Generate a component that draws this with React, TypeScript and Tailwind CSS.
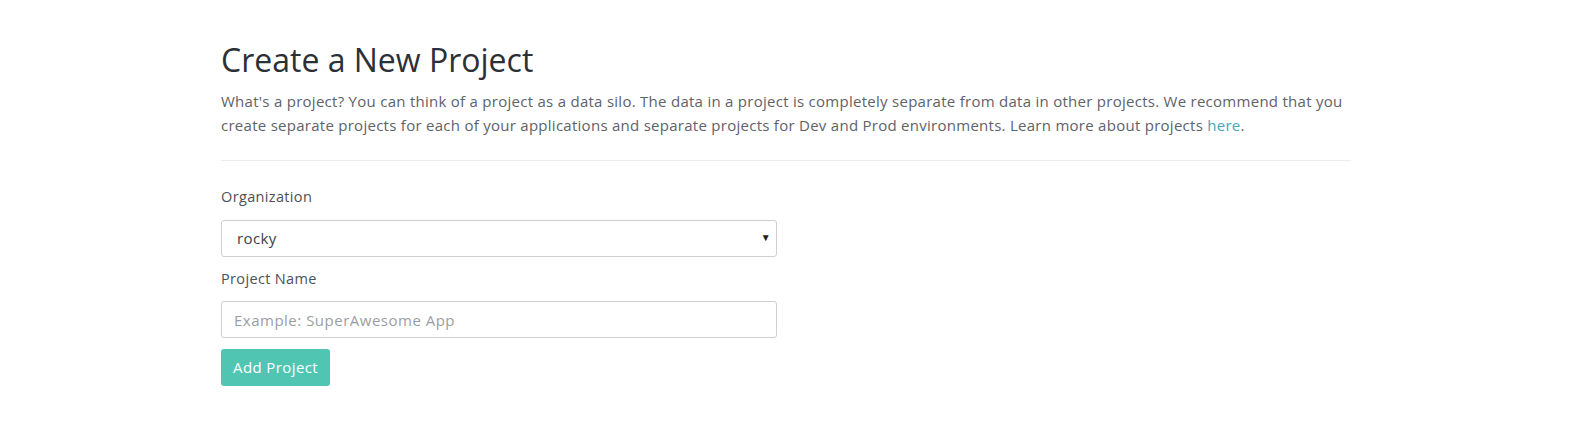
import { useState } from "react";

const font = { fontFamily: '"Open Sans", "Liberation Sans", sans-serif' };

export default function App() {
  const [org, setOrg] = useState("rocky");
  const [name, setName] = useState("");

  return (
    <div className="min-h-[437px] bg-white tracking-[0.27px]" style={font}>
      <div className="ml-[221px] w-[1130px] pt-[40px]">
        <h1 className="text-[32px] leading-[40px] font-normal tracking-[0px] text-[#2b3036]">
          Create a New Project
        </h1>
        <p className="mt-[9px] text-[15px] leading-[24px] text-[#5e6269]">
          What's a project? You can think of a project as a data silo. The data in a project is completely separate
          from data in other projects. We recommend that you create separate projects for each of your applications
          and separate projects for Dev and Prod environments. Learn more about projects{" "}
          <a href="#" className="text-[#3fa7b8]">
            here
          </a>
          .
        </p>
        <div className="mt-[23px] h-px bg-[#ececec]" />

        <form className="mt-[26px] w-[556px]" onSubmit={(e) => e.preventDefault()}>
          <label className="block text-[14.5px] leading-[20px] tracking-[0.35px] text-[#4d5157]">Organization</label>
          <div className="relative mt-[13px]">
            <select
              value={org}
              onChange={(e) => setOrg(e.target.value)}
              className="h-[37px] w-full appearance-none rounded-[3px] border border-[#cfcfcf] bg-white pl-[15px] text-[15px] tracking-[0.4px] text-[#3b3f45] outline-none"
            >
              <option value="rocky">rocky</option>
            </select>
            <span className="pointer-events-none absolute right-[6px] top-[10px] text-[10px] text-[#222]">▼</span>
          </div>

          <label className="mt-[12px] block text-[14.5px] leading-[20px] tracking-[0.35px] text-[#4d5157]">
            Project Name
          </label>
          <input
            value={name}
            onChange={(e) => setName(e.target.value)}
            placeholder="Example: SuperAwesome App"
            className="mt-[12px] block h-[37px] w-full rounded-[3px] border border-[#cfcfcf] px-[12px] text-[15px] tracking-[0.5px] text-[#3b3f45] outline-none placeholder:text-[#9a9ea4]"
          />

          <button
            type="submit"
            className="mt-[11px] h-[37px] rounded-[3px] bg-[#50c5b2] px-[12px] text-[15px] tracking-[0.4px] text-white"
          >
            Add Project
          </button>
        </form>
      </div>
    </div>
  );
}
